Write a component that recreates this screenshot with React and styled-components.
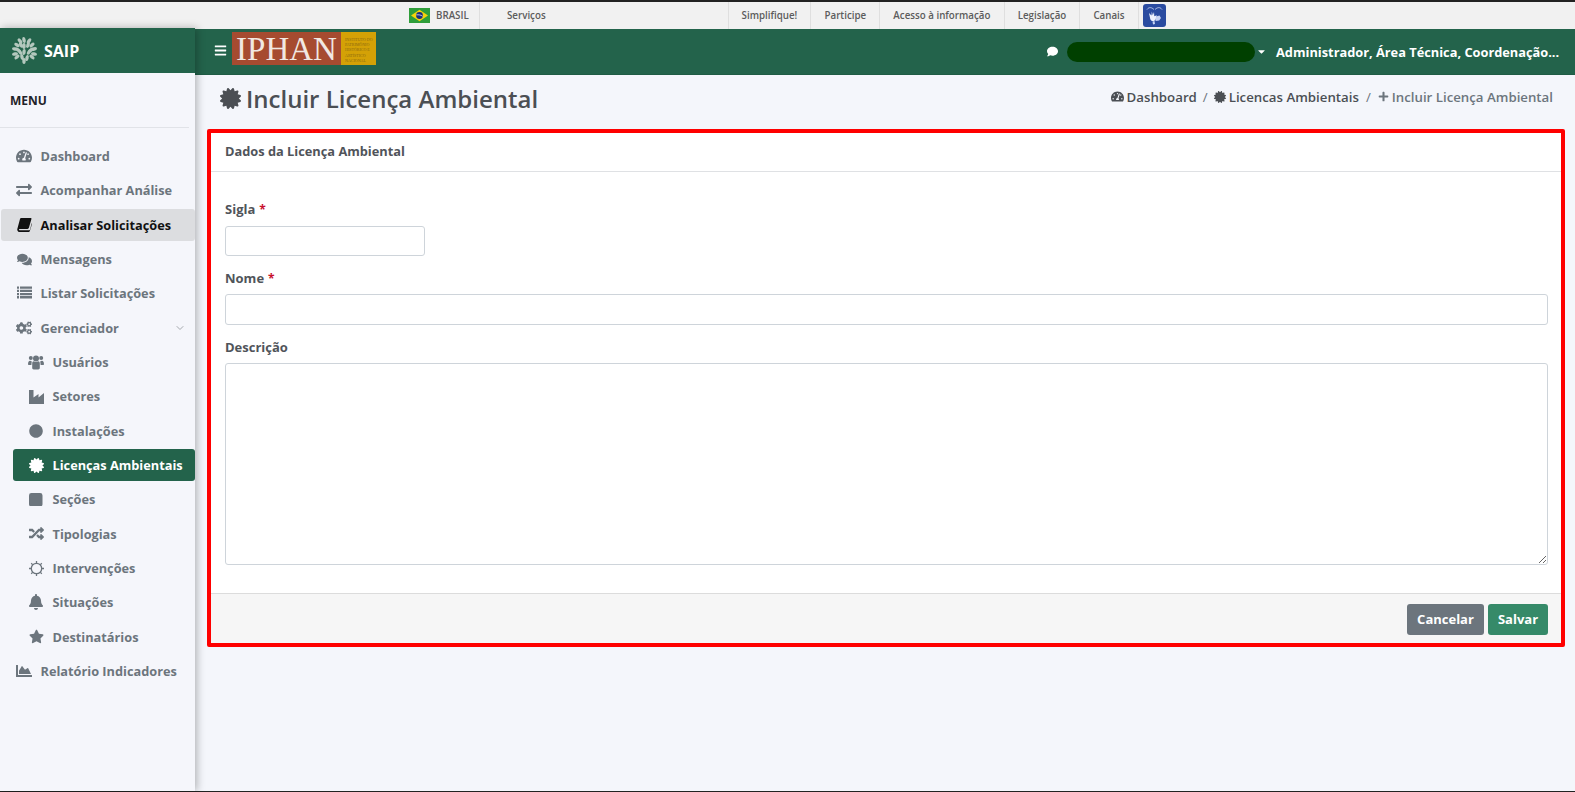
import React from "react";
import styled, { createGlobalStyle } from "styled-components";
import {
  FaTachometerAlt, FaExchangeAlt, FaComments, FaCogs,
  FaCircle, FaCertificate, FaRandom, FaBell, FaStar, FaChartArea,
  FaBars, FaComment, FaCaretDown, FaPlus,
} from "react-icons/fa";
import { FiChevronDown } from "react-icons/fi";

const Global = createGlobalStyle`
  html, body { margin: 0; height: 100%; overflow: hidden; background: #f4f6fb; }
  #root { height: 100%; }
  * { box-sizing: border-box; }
  body { font-family: "Open Sans", "Liberation Sans", sans-serif; }
`;

const Page = styled.div`display: flex; flex-direction: column; height: 792px; border-top: 2px solid #222; border-bottom: 1px solid #222;`;
const GovBar = styled.div`display: flex; align-items: stretch; height: 27px; background: #f1f1f1; padding-left: 409px; font-size: 9.75px; font-weight: 600; color: #5c5c5c;`;
const GovBrand = styled.div`display: flex; align-items: center; gap: 6px; width: 70px;`;
const GovItem = styled.div`display: flex; align-items: center; border-left: 1px solid #dfdfdf; padding: 0 13.1px; white-space: nowrap;
  ${(p) => p.$wide && "width: 248.5px; padding-left: 27px;"}`;
const VLibras = styled.div`display: flex; align-items: center; border-left: 1px solid #dfdfdf; padding-left: 4px;`;

const Body = styled.div`display: flex; flex: 1; min-height: 0;`;
const Sidebar = styled.aside`width: 195px; flex: none; margin-top: -1px; background: #f5f6fb; box-shadow: 2px 0 8px rgba(0,0,0,.28); z-index: 2; display: flex; flex-direction: column;`;
const Brand = styled.div`height: 45px; background: #23634b; color: #fff; display: flex; align-items: center; gap: 7px; padding-left: 12px; font-size: 16px; font-weight: 700;`;
const MenuTitle = styled.div`padding: 19px 0 0 10px; height: 55px; font-size: 12px; font-weight: 700; color: #1f2328; border-bottom: 1px solid #e1e3e8; margin-right: 6px;`;
const Nav = styled.nav`padding: 12px 0 0 1px; display: flex; flex-direction: column; gap: 2px;`;
const SubNav = styled.div`margin-left: 12px; display: flex; flex-direction: column; gap: 2px;`;
const Item = styled.div`height: 32.33px; display: flex; align-items: center; padding-left: 16px; border-radius: 3px; font-size: 12.75px; font-weight: 700; white-space: nowrap;
  color: ${(p) => (p.$active ? "#fff" : p.$current ? "#111" : "#6c757d")};
  background: ${(p) => (p.$active ? "#23634b" : p.$current ? "#dcdde0" : "transparent")};`;
const IconSlot = styled.span`width: 16px; margin: 0 8.5px 0 -1px; display: flex; justify-content: center; align-items: center; font-size: ${(p) => p.$size || 15}px; flex: none;`;
const Chevron = styled.span`margin-left: auto; margin-right: 9px; display: flex; font-size: 12px; color: #a5a9ae;`;

const Main = styled.main`flex: 1; min-width: 0; display: flex; flex-direction: column;`;
const Topbar = styled.header`height: 46px; background: #23634b; display: flex; align-items: center; color: #fff; padding-left: 19px; border-bottom: 1px solid #1f5c45;`;
const Burger = styled.span`display: flex; font-size: 13px; margin: -2px 5px 0 0;`;
const Logo = styled.div`display: flex; width: 144px; height: 33px; margin-top: -6px;`;
const LogoRed = styled.div`width: 109px; background: #a64b30; color: #f1e8e2; font-family: "Liberation Serif", serif; font-size: 33px; line-height: 31px; padding-top: 2px; text-align: center;`;
const LogoYellow = styled.div`flex: 1; background: #d4a106; color: #8b6a10; font-family: "Liberation Serif", serif; font-size: 4px; line-height: 5.2px; padding: 5px 0 0 4px; white-space: pre;`;
const TopRight = styled.div`margin-left: auto; display: flex; align-items: center; padding-right: 15px; font-size: 12.8px; font-weight: 700;`;
const Mask = styled.div`width: 188px; height: 20px; border-radius: 10px; background: #004000; margin: 0 1px 0 9px;`;
const Roles = styled.div`width: 284px; margin-left: 9px; white-space: nowrap;`;

const Head = styled.div`height: 54px; display: flex; align-items: center; padding: 0 22px 7px 25px; color: #4b4f54;`;
const Title = styled.h1`margin: 0; display: flex; align-items: center; gap: 5px; font-size: 24px; font-weight: 600; line-height: 1;`;
const Crumbs = styled.div`margin-left: auto; display: flex; align-items: center; font-size: 13.25px; font-weight: 600; margin-top: -4px; white-space: nowrap;`;
const Crumb = styled.span`display: inline-flex; align-items: center; gap: 3px; color: ${(p) => (p.$last ? "#6c757d" : "#4b4f54")};`;
const Sep = styled.span`margin: 0 ${(p) => p.$m || 7}px; color: #6c757d; font-weight: 400;`;

const Card = styled.section`margin: 0 10px 0 12px; height: 518px; border: 4px solid #f00; border-radius: 2px; background: #fff; display: flex; flex-direction: column;`;
const CardHead = styled.div`height: 39px; padding: 0 0 3px 14px; display: flex; align-items: center; font-size: 12.8px; font-weight: 700; color: #50545a; border-bottom: 1px solid #dfe1e4; flex: none;`;
const CardBody = styled.div`flex: 1; padding: 27px 13px 0 14px;`;
const Field = styled.div`display: flex; flex-direction: column;`;
const Label = styled.label`font-size: 13px; font-weight: 700; color: #50545a; line-height: 20px; margin-bottom: ${(p) => p.$gap ?? 6}px;`;
const Req = styled.span`color: #c8102e; margin-left: 4px; font-size: 12px;`;
const Input = styled.input`display: block; height: ${(p) => p.$h || 31}px; width: ${(p) => p.$w || "100%"}; border: 1px solid #ced4da; border-radius: 3px; background: #fff; margin-bottom: 12px; outline: none;`;
const Area = styled.textarea`display: block; width: 100%; height: 202px; border: 1px solid #ced4da; border-radius: 3px; background: #fff; outline: none;`;
const CardFoot = styled.div`height: 50px; flex: none; background: #f6f6f6; border-top: 1px solid #dcdcdc; padding: 10px 13px 0 0; display: flex; justify-content: flex-end; gap: 4px; align-items: flex-start;`;
const Button = styled.button`height: 31px; padding: 0 0 2px; width: ${(p) => p.$w}px; border: 0; border-radius: 3px; color: #fff; font: 700 13px "Open Sans", sans-serif; background: ${(p) => p.$bg};`;

const BookIcon = () => (
  <svg width="15" height="15" viewBox="0 0 16 16" fill="currentColor">
    <path d="M4.6 1h10c.6 0 1 .5.8 1.1l-2.7 9.4c-.2.8-.7 1.2-1.5 1.2H2.900c-.7 0-1 .7-.7 1.100.2.3.6.4 1 .4h9.600c.5 0 .8-.3 1-.7l2-7 .2 1-2.300 7.500c-.2.6-.7 1-1.300 1H2.900C1.600 16 .5 15 .3 13.800c-.1-.5 0-1 .1-1.400L3.200 2.200C3.400 1.500 3.900 1 4.600 1z" />
  </svg>
);

const ListIcon = () => (
  <svg width="15" height="14" viewBox="0 0 15 14" fill="currentColor">
    {[0.5, 3.7, 6.9, 10.1].map((y) => (
      <path key={y} d={`M0 ${y}h2v2.300H0zM3 ${y}h12v2.300H3z`} />
    ))}
  </svg>
);

const UsersIcon = () => (
  <svg width="16" height="15" viewBox="0 0 16 15" fill="currentColor">
    <circle cx="2.800" cy="3" r="2" />
    <circle cx="13.200" cy="3" r="2" />
    <circle cx="8" cy="3.600" r="3" />
    <path d="M0 9.500C0 7 .8 5.800 2 5.800c.7 0 1.200.4 1.800.7-.2 1.100-.4 2.300-.4 3.500H.8c-.5 0-.8-.2-.8-.5zM16 9.500c0-2.500-.8-3.700-2-3.700-.7 0-1.200.4-1.800.7.2 1.100.4 2.300.4 3.500h2.600c.5 0 .8-.2.8-.5z" />
    <path d="M4.200 8.500c0-1.400.7-2.300 1.600-2.300.6.500 1.300.8 2.200.8s1.600-.3 2.200-.8c.9 0 1.600.9 1.600 2.300v4.300c0 1.200-.6 1.700-1.500 1.700H5.700c-.9 0-1.500-.5-1.500-1.700z" />
  </svg>
);

const IndustryIcon = () => (
  <svg width="15" height="15" viewBox="0 0 15 15" fill="currentColor">
    <path d="M0 1h4.500v7.500L9.500 5v3.500L15 4v11H0z" />
  </svg>
);

const RoundSquare = () => (
  <svg width="13.500" height="13.500" viewBox="0 0 14 14" fill="currentColor">
    <rect width="14" height="14" rx="2.500" />
  </svg>
);

const SunRing = () => (
  <svg width="15" height="15" viewBox="0 0 15 15" fill="none" stroke="currentColor">
    <circle cx="7.500" cy="7.500" r="5.200" strokeWidth="1.300" />
    <path d="M7.500 0v2M7.500 13v2M0 7.500h2M13 7.500h2M2.200 2.200l1.400 1.400M11.400 11.400l1.400 1.400M2.200 12.800l1.400-1.400M11.400 3.600l1.400-1.400" strokeWidth="1.300" />
  </svg>
);

const BrFlag = () => (
  <svg width="21" height="15" viewBox="0 0 21 15">
    <rect width="21" height="15" fill="#2f9e3a" />
    <path d="M10.5 1.8 19 7.500l-8.500 5.700L2 7.500z" fill="#f6d30b" />
    <circle cx="10.500" cy="7.500" r="3.400" fill="#1c2f7c" />
    <path d="M7.300 6.900c2.300-.4 4.600.1 6.300 1.300" stroke="#fff" strokeWidth=".7" fill="none" />
  </svg>
);

const LibrasIcon = () => (
  <svg width="23" height="23" viewBox="0 0 23 23">
    <rect width="23" height="23" rx="3" fill="#2a4ba0" />
    <path d="M4 5.500C6 2.800 8.500 3.200 11 5.500M19 5.500C17 2.800 14.500 3.200 12 5.500" stroke="#dfe8fb" strokeWidth=".7" fill="none" />
    <path d="M6 9l2.500 2.500.3-4 1 3.800 1.200-3.300.3 4.300 2.500-1-1 3.700c-.8 2.600-4.300 2.800-5.500.2z" fill="#eef2fd" />
    <path d="M13 12.500l3.500-1 1.500 2.500-1.800 2.500-3.700.5z" fill="#c6d3f3" />
    <path d="M9.500 17.500l.5 3 2-.5-.5-3z" fill="#c6d3f3" />
  </svg>
);

const leaves = [
  [12, 3, -10], [8, 4, -40], [17, 4, 35], [5, 8, -60], [20, 8, 50], [3, 12, -80], [22, 12, 75],
  [9, 8, -25], [16, 8, 20], [12, 9, 0], [6, 13, -50], [19, 13, 45], [12, 15, 5], [3, 17, -100],
  [22, 17, 100], [8, 15, -30], [17, 15, 30], [5, 20, -130], [20, 20, 130], [10, 20, -10], [15, 21, 15], [12, 24, 0],
];
const LeafLogo = () => (
  <svg width="25" height="27" viewBox="0 0 25 27" fill="#b4c8be">
    {leaves.map(([x, y, r]) => (
      <ellipse key={`${x}-${y}`} cx={x} cy={y} rx="1.700" ry="3" transform={`rotate(${r} ${x} ${y})`} />
    ))}
  </svg>
);

const main = [
  [FaTachometerAlt, "Dashboard", null, 16],
  [FaExchangeAlt, "Acompanhar Análise", null, 16],
  [BookIcon, "Analisar Solicitações", "current"],
  [FaComments, "Mensagens", null, 15],
  [ListIcon, "Listar Solicitações"],
];
const sub = [
  [UsersIcon, "Usuários"],
  [IndustryIcon, "Setores"],
  [FaCircle, "Instalações", null, 14],
  [FaCertificate, "Licenças Ambientais", "active", 15],
  [RoundSquare, "Seções"],
  [FaRandom, "Tipologias", null, 15],
  [SunRing, "Intervenções"],
  [FaBell, "Situações", null, 16],
  [FaStar, "Destinatários", null, 15],
];

const NavItem = ({ icon: Icon, label, state, size, children }) => (
  <Item $active={state === "active"} $current={state === "current"}>
    <IconSlot $size={size}><Icon /></IconSlot>
    {label}
    {children}
  </Item>
);

export default function App() {
  return (
    <Page>
      <Global />
      <GovBar>
        <GovBrand><BrFlag /> BRASIL</GovBrand>
        <GovItem $wide>Serviços</GovItem>
        <GovItem>Simplifique!</GovItem>
        <GovItem>Participe</GovItem>
        <GovItem>Acesso à informação</GovItem>
        <GovItem>Legislação</GovItem>
        <GovItem>Canais</GovItem>
        <VLibras><LibrasIcon /></VLibras>
      </GovBar>
      <Body>
        <Sidebar>
          <Brand><LeafLogo /> SAIP</Brand>
          <MenuTitle>MENU</MenuTitle>
          <Nav>
            {main.map(([icon, label, state, size]) => <NavItem key={label} icon={icon} label={label} state={state} size={size} />)}
            <NavItem icon={FaCogs} label="Gerenciador" size={16}><Chevron><FiChevronDown /></Chevron></NavItem>
            <SubNav>
              {sub.map(([icon, label, state, size]) => <NavItem key={label} icon={icon} label={label} state={state} size={size} />)}
            </SubNav>
            <NavItem icon={FaChartArea} label="Relatório Indicadores" size={18} />
          </Nav>
        </Sidebar>
        <Main>
          <Topbar>
            <Burger><FaBars /></Burger>
            <Logo>
              <LogoRed>IPHAN</LogoRed>
              <LogoYellow>{"INSTITUTO DO\nPATRIMÔNIO\nHISTÓRICO E\nARTÍSTICO\nNACIONAL"}</LogoYellow>
            </Logo>
            <TopRight>
              <FaComment size={11} />
              <Mask />
              <FaCaretDown size={11} />
              <Roles>Administrador, Área Técnica, Coordenação...</Roles>
            </TopRight>
          </Topbar>
          <Head>
            <Title><FaCertificate size={21} /> Incluir Licença Ambiental</Title>
            <Crumbs>
              <Crumb><FaTachometerAlt size={13} /> Dashboard</Crumb>
              <Sep $m={6}>/</Sep>
              <Crumb><FaCertificate size={12} /> Licencas Ambientais</Crumb>
              <Sep>/</Sep>
              <Crumb $last><FaPlus size={11} /> Incluir Licença Ambiental</Crumb>
            </Crumbs>
          </Head>
          <Card>
            <CardHead>Dados da Licença Ambiental</CardHead>
            <CardBody>
              <Field>
                <Label>Sigla<Req>*</Req></Label>
                <Input $w="200px" $h={30} />
              </Field>
              <Field>
                <Label $gap={5}>Nome<Req>*</Req></Label>
                <Input />
              </Field>
              <Field>
                <Label>Descrição</Label>
                <Area />
              </Field>
            </CardBody>
            <CardFoot>
              <Button $w={77} $bg="#6c757d">Cancelar</Button>
              <Button $w={60} $bg="#368a69">Salvar</Button>
            </CardFoot>
          </Card>
        </Main>
      </Body>
    </Page>
  );
}
